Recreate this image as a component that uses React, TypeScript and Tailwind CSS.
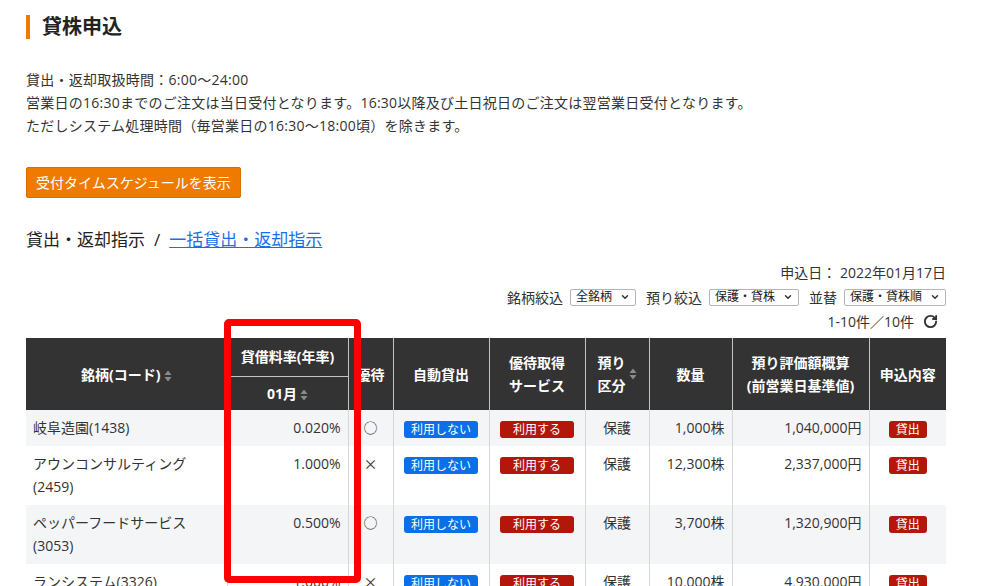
import { ChevronDown, RotateCw } from "lucide-react";

type Row = {
  name: string;
  rate: string;
  yutai: string;
  qty: string;
  value: string;
};

const rows: Row[] = [
  { name: "岐阜造園(1438)", rate: "0.020%", yutai: "○", qty: "1,000株", value: "1,040,000円" },
  { name: "アウンコンサルティング(2459)", rate: "1.000%", yutai: "×", qty: "12,300株", value: "2,337,000円" },
  { name: "ペッパーフードサービス(3053)", rate: "0.500%", yutai: "○", qty: "3,700株", value: "1,320,900円" },
  { name: "ランシステム(3326)", rate: "1.000%", yutai: "×", qty: "10,000株", value: "4,930,000円" },
  { name: "ヨシックス(3221)", rate: "0.500%", yutai: "○", qty: "500株", value: "1,012,500円" },
  { name: "コロワイド(7616)", rate: "0.020%", yutai: "○", qty: "2,000株", value: "3,802,000円" },
];

function SortIcon() {
  return (
    <svg width="8" height="12" viewBox="0 0 8 12" className="ml-[3px] inline-block align-middle">
      <path d="M4 0.5 L7.5 5 L0.5 5 Z" fill="#8a8a8a" />
      <path d="M0.5 7 L7.5 7 L4 11.5 Z" fill="#8a8a8a" />
    </svg>
  );
}

function FakeSelect({ label }: { label: string }) {
  return (
    <span className="ml-[7px] inline-flex h-[17px] items-center gap-[8px] rounded-[2px] border border-[#b5b5b5] bg-white pl-[5px] pr-[5px] text-[12px] leading-none text-[#222]">
      {label}
      <ChevronDown size={10} strokeWidth={3.5} className="text-[#333]" />
    </span>
  );
}

function Badge({ kind, children }: { kind: "blue" | "red"; children: React.ReactNode }) {
  const color = kind === "blue" ? "bg-[#0b6fe8]" : "bg-[#b3170b]";
  return (
    <span
      className={`${color} inline-block h-[17px] rounded-[3px] text-center align-middle text-[12px] leading-[17px] text-white`}
    >
      {children}
    </span>
  );
}

export default function App() {
  const th = "border-l border-[#c4c4c4] px-[6px] text-center align-middle text-[14px] font-bold leading-[23px] text-white";
  const td = "border-l border-[#d4d7db] px-[7px] pt-[6px] pb-[7px] align-top text-[14px] leading-[23px] text-[#333]";

  return (
    <div className="min-h-screen bg-white pl-[26px] pr-[35px] font-['Open_Sans','Noto_Sans_CJK_JP',sans-serif] text-[#333]">
      {/* 見出し */}
      <div className="flex items-center pt-[15px]">
        <span className="h-[24px] w-[4px] bg-[#ef7a00]" />
        <h1 className="ml-[12px] text-[20px] font-bold leading-[24px] text-[#222]">貸株申込</h1>
      </div>

      <div className="mt-[29px] text-[14px] leading-[23px] tracking-[0.25px]">
        <p>貸出・返却取扱時間：6:00〜24:00</p>
        <p>営業日の16:30までのご注文は当日受付となります。16:30以降及び土日祝日のご注文は翌営業日受付となります。</p>
        <p>ただしシステム処理時間（毎営業日の16:30〜18:00頃）を除きます。</p>
      </div>

      <button
        type="button"
        className="mt-[30px] h-[31px] rounded-[2px] border border-[#d86d00] bg-[#ef7a00] px-[9px] text-[14px] leading-none text-white"
      >
        受付タイムスケジュールを表示
      </button>

      <div className="mt-[30px] text-[17px] leading-[24px] text-[#222]">
        貸出・返却指示
        <span className="mx-[9px]">/</span>
        <a href="#" className="text-[#1a6fe6] underline">
          一括貸出・返却指示
        </a>
      </div>

      <div className="mt-[10px] flex h-[20px] items-center justify-end text-[14px]">申込日： 2022年01月17日</div>
      <div className="mt-[5px] flex h-[20px] items-center justify-end text-[14px]">
        <span>銘柄絞込</span>
        <FakeSelect label="全銘柄" />
        <span className="ml-[10px]">預り絞込</span>
        <FakeSelect label="保護・貸株" />
        <span className="ml-[10px]">並替</span>
        <FakeSelect label="保護・貸株順" />
      </div>
      <div className="mt-[4px] flex h-[20px] items-center justify-end pr-[8px] text-[14px]">
        1-10件／10件
        <RotateCw size={15} strokeWidth={3} className="ml-[9px] text-[#333]" />
      </div>

      <div className="relative mt-[7px] w-[920px]">
        <table className="w-[920px] table-fixed border-collapse">
          <colgroup>
            <col className="w-[201px]" />
            <col className="w-[121px]" />
            <col className="w-[45px]" />
            <col className="w-[96px]" />
            <col className="w-[96px]" />
            <col className="w-[64px]" />
            <col className="w-[83px]" />
            <col className="w-[137px]" />
            <col className="w-[77px]" />
          </colgroup>
          <thead className="bg-[#333333]">
            <tr className="h-[38px]">
              <th rowSpan={2} className={`${th} border-l-0`}>
                銘柄(コード)
                <SortIcon />
              </th>
              <th className={`${th} border-b`}>貸借料率(年率)</th>
              <th rowSpan={2} className={th}>優待</th>
              <th rowSpan={2} className={th}>自動貸出</th>
              <th rowSpan={2} className={th}>
                優待取得
                <br />
                サービス
              </th>
              <th rowSpan={2} className={th}>
                <span className="inline-block text-left align-middle">
                  預り
                  <br />
                  区分
                </span>
                <SortIcon />
              </th>
              <th rowSpan={2} className={th}>数量</th>
              <th rowSpan={2} className={th}>
                預り評価額概算
                <br />
                (前営業日基準値)
              </th>
              <th rowSpan={2} className={th}>申込内容</th>
            </tr>
            <tr className="h-[34px]">
              <th className={th}>
                01月
                <SortIcon />
              </th>
            </tr>
          </thead>
          <tbody>
            {rows.map((r, i) => (
              <tr key={r.name} className={i % 2 === 0 ? "bg-[#f4f5f7]" : "bg-white"}>
                <td className={`${td} border-l-0`}>{r.name}</td>
                <td className={`${td} text-right`}>{r.rate}</td>
                <td className={`${td} text-center font-['Noto_Sans_CJK_JP',sans-serif]`}>{r.yutai}</td>
                <td className={`${td} text-center`}>
                  <Badge kind="blue">
                    <span className="inline-block w-[74px]">利用しない</span>
                  </Badge>
                </td>
                <td className={`${td} text-center`}>
                  <Badge kind="red">
                    <span className="inline-block w-[74px]">利用する</span>
                  </Badge>
                </td>
                <td className={`${td} text-center`}>保護</td>
                <td className={`${td} text-right`}>{r.qty}</td>
                <td className={`${td} text-right`}>{r.value}</td>
                <td className={`${td} text-center`}>
                  <Badge kind="red">
                    <span className="inline-block w-[38px]">貸出</span>
                  </Badge>
                </td>
              </tr>
            ))}
          </tbody>
        </table>

        {/* 強調枠 */}
        <div className="pointer-events-none absolute left-[198px] top-[-19px] h-[264px] w-[137px] rounded-[5px] border-[7px] border-[#ff0000]" />
      </div>
    </div>
  );
}
